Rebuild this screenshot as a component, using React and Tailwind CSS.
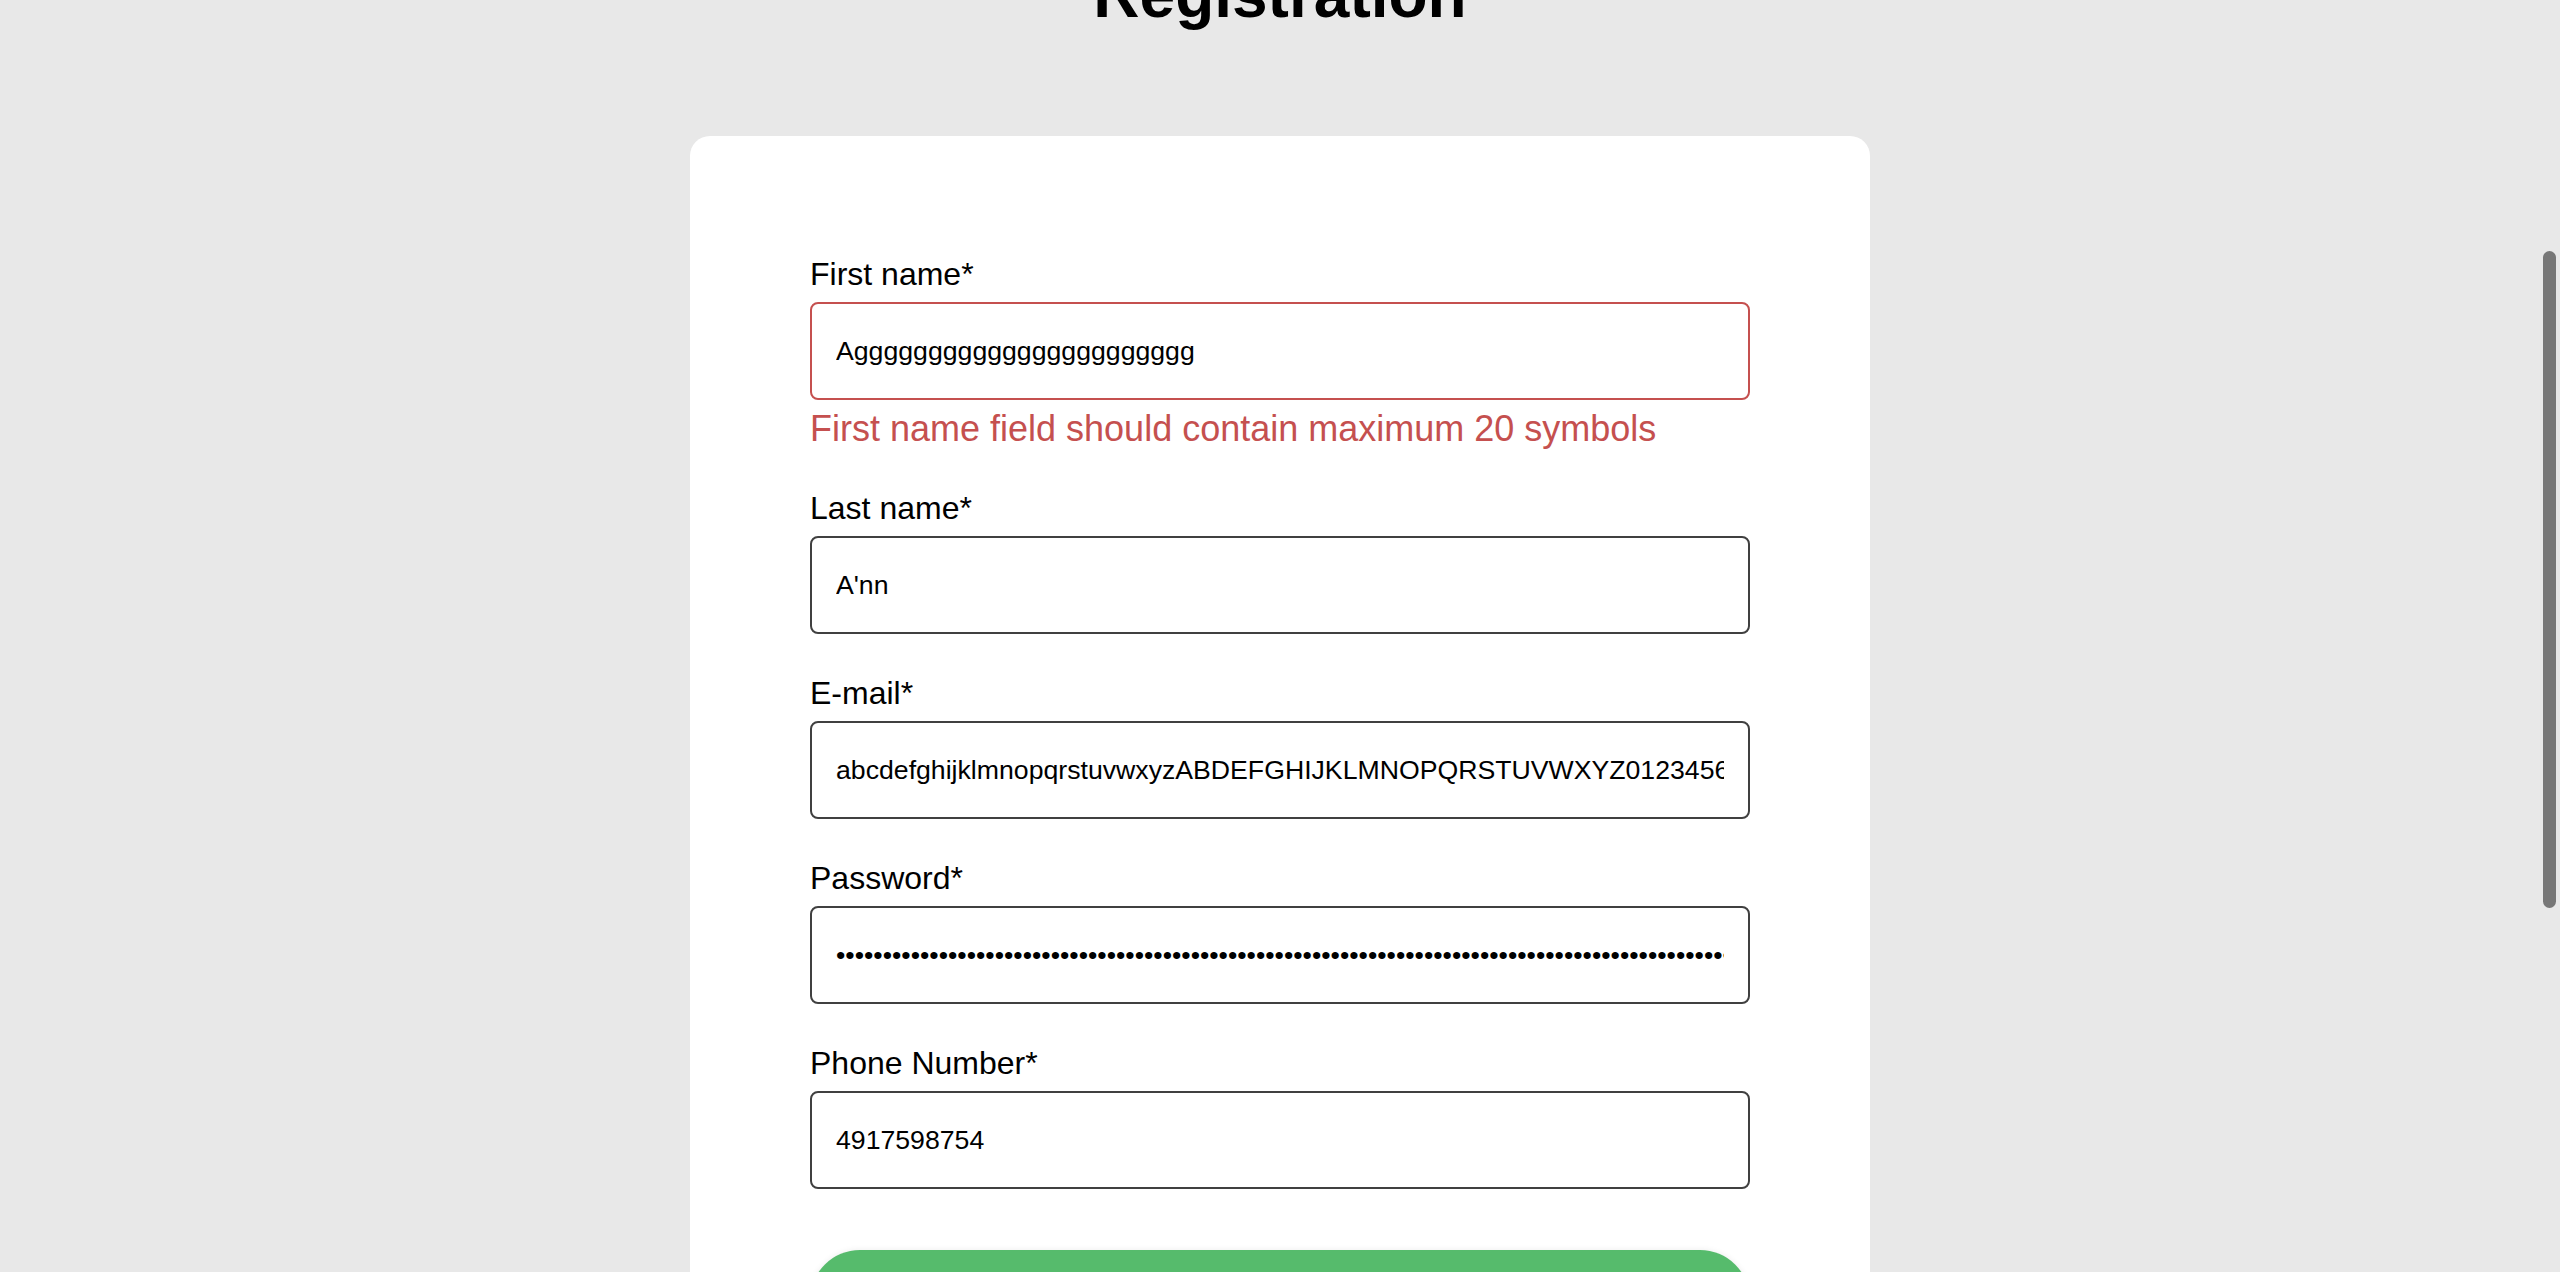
import { useState } from 'react'

const fields = [
  { name: 'firstName', label: 'First name*', value: 'Aggggggggggggggggggggggg', error: 'First name field should contain maximum 20 symbols' },
  { name: 'lastName', label: 'Last name*', value: "A'nn" },
  { name: 'email', label: 'E-mail*', value: 'abcdefghijklmnopqrstuvwxyzABDEFGHIJKLMNOPQRSTUVWXYZ0123456789@gmail.com' },
  { name: 'password', label: 'Password*', value: 'p'.repeat(140), type: 'password' },
  { name: 'phone', label: 'Phone Number*', value: '4917598754' },
]

export default function App() {
  const [form, setForm] = useState(
    Object.fromEntries(fields.map(f => [f.name, f.value]))
  )

  function handleChange(e) {
    const { name, value } = e.target
    setForm(prev => ({ ...prev, [name]: value }))
  }

  return (
    <main className="relative h-screen overflow-hidden bg-[#e8e8e8] font-['Liberation_Sans',Arial,sans-serif] text-black">
      {/* Header (page is scrolled a little) */}
      <h1 className="-mt-[42px] text-center text-[64px] font-bold leading-[74px]">Registration</h1>

      {/* Card */}
      <div className="mx-auto mt-[104px] w-[1180px] rounded-[20px] bg-white p-[120px]">
        <form className="flex flex-col gap-[41px]" onSubmit={e => e.preventDefault()}>
          {fields.map(f => (
            <div key={f.name}>
              <label htmlFor={f.name} className="mb-[9px] block text-[32px] leading-[37px]">
                {f.label}
              </label>
              <input
                id={f.name}
                name={f.name}
                type={f.type || 'text'}
                value={form[f.name]}
                onChange={handleChange}
                className={
                  'block h-[98px] w-full rounded-[8px] border-2 bg-white px-[24px] text-[26.67px] text-black outline-none ' +
                  (f.error ? 'border-[#c5504f]' : 'border-[#404040]')
                }
              />
              {f.error && (
                <p className="mt-[8px] text-[36px] leading-[41px] text-[#c5504f]">{f.error}</p>
              )}
            </div>
          ))}

          <button
            type="submit"
            className="mt-[20px] h-[100px] w-full rounded-[50px] bg-[#56bb6c] text-[32px] font-bold text-white shadow-[0_0_6px_rgba(0,0,0,0.08)]"
          >
            Register
          </button>
        </form>
      </div>

      {/* Overlay scrollbar */}
      <div className="absolute right-[4px] top-[251px] h-[657px] w-[13px] rounded-full bg-[#777777]" />
    </main>
  )
}
